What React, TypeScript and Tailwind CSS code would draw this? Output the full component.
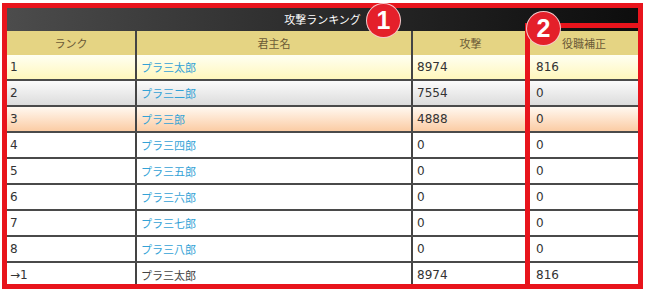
const rows = [
  { rank: "1", name: "プラ三太郎", atk: "8974", bonus: "816", bg: "bg-gradient-to-b from-[#fffff2] to-[#fff7bc]", link: true },
  { rank: "2", name: "プラ三二郎", atk: "7554", bonus: "0", bg: "bg-gradient-to-b from-[#fbfbfb] to-[#dcdcdc]", link: true },
  { rank: "3", name: "プラ三郎", atk: "4888", bonus: "0", bg: "bg-gradient-to-b from-[#fff8f0] to-[#fbcca4]", link: true },
  { rank: "4", name: "プラ三四郎", atk: "0", bonus: "0", bg: "bg-white", link: true },
  { rank: "5", name: "プラ三五郎", atk: "0", bonus: "0", bg: "bg-white", link: true },
  { rank: "6", name: "プラ三六郎", atk: "0", bonus: "0", bg: "bg-white", link: true },
  { rank: "7", name: "プラ三七郎", atk: "0", bonus: "0", bg: "bg-white", link: true },
  { rank: "8", name: "プラ三八郎", atk: "0", bonus: "0", bg: "bg-white", link: true },
  { rank: "→1", name: "プラ三太郎", atk: "8974", bonus: "816", bg: "bg-white", link: false },
];

function Badge({ n }: { n: string }) {
  return (
    <div className="w-[33px] h-[33px] rounded-full bg-[#e4202a] ring-1 ring-[#f6c9cb] flex items-center justify-center text-white font-bold text-[25px] leading-none font-['Liberation_Sans',sans-serif]">
      {n}
    </div>
  );
}

export default function App() {
  return (
    <div className="relative w-[647px] h-[292px] bg-white overflow-hidden font-['DejaVu_Sans','Noto_Sans_CJK_JP',sans-serif] text-[#333]">
      <div className="ml-[7px] mt-[8px] w-[631px]">
        <div className="h-[23px] bg-gradient-to-r from-[#4c4c4c] to-[#0d0d0d] flex items-center justify-center text-white text-[11px] font-['Noto_Sans_CJK_JP',sans-serif]">
          攻撃ランキング
        </div>
        <div className="h-[24px] bg-[#e5d483] flex text-[11px] text-[#6b5a36] font-['Noto_Sans_CJK_JP',sans-serif]">
          <div className="w-[130px] border-r-2 border-[#444] flex items-center justify-center">ランク</div>
          <div className="w-[276px] border-r-2 border-[#444] flex items-center justify-center">君主名</div>
          <div className="w-[117px] border-r-2 border-[#444] flex items-center justify-center">攻撃</div>
          <div className="flex-1 flex items-center justify-center">役職補正</div>
        </div>
        {rows.map((r, i) => (
          <div key={i} className={`h-[26px] flex border-b-2 border-[#4a4a4a] text-[12px] ${r.bg}`}>
            <div className="w-[130px] border-r-2 border-[#444] flex items-center pl-[3px]">{r.rank}</div>
            <div
              className={`w-[276px] border-r-2 border-[#444] flex items-center pl-[4px] text-[11px] font-['Noto_Sans_CJK_JP',sans-serif] ${
                r.link ? "text-[#33a2d6]" : "text-[#444]"
              }`}
            >
              {r.name}
            </div>
            <div className="w-[117px] border-r-2 border-[#444] flex items-center pl-[4px]">{r.atk}</div>
            <div className="flex-1 flex items-center pl-[6px]">{r.bonus}</div>
          </div>
        ))}
      </div>

      <div className="absolute left-[2px] top-[3px] w-[641px] h-[286px] border-[5px] border-[#e8141c]" />
      <div className="absolute left-[525px] top-[23px] w-[118px] h-[266px] border-[5px] border-[#e8141c]" />
      <div className="absolute left-[367px] top-[4px]">
        <Badge n="1" />
      </div>
      <div className="absolute left-[527px] top-[12px]">
        <Badge n="2" />
      </div>
    </div>
  );
}
